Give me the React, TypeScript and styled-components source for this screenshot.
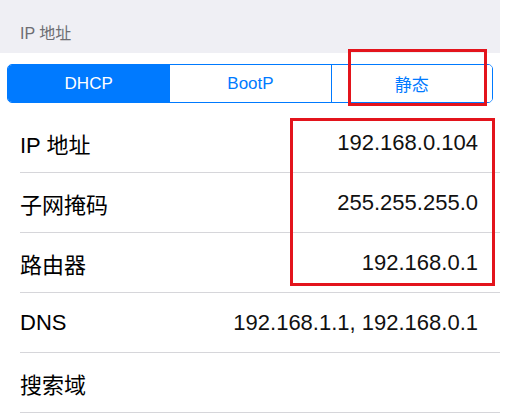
import styled, { createGlobalStyle } from "styled-components";

const GlobalStyle = createGlobalStyle`
  body {
    margin: 0;
    background: #ffffff;
    font-family: "Liberation Sans", "Noto Sans CJK SC", sans-serif;
  }
`;

const Page = styled.div`
  position: relative;
  width: 500px;
`;

const SectionHeader = styled.div`
  height: 53px;
  box-sizing: border-box;
  background: #efeff4;
  padding: 0 20px 9px;
  display: flex;
  align-items: flex-end;
  font-size: 16px;
  color: #6d6d72;
`;

const SegmentBar = styled.div`
  margin: 11px 7px 0;
  height: 39px;
  box-sizing: border-box;
  display: grid;
  grid-template-columns: 1fr 1fr 1fr;
  border: 1px solid #007aff;
  border-radius: 5px;
  overflow: hidden;
`;

const Segment = styled.div<{ $active?: boolean }>`
  display: flex;
  align-items: center;
  justify-content: center;
  font-size: 17px;
  color: ${({ $active }) => ($active ? "#ffffff" : "#007aff")};
  background: ${({ $active }) => ($active ? "#007aff" : "#ffffff")};
  & + & {
    border-left: 1px solid #007aff;
  }
`;

const List = styled.div`
  margin-top: 10px;
  padding-left: 20px;
`;

const Row = styled.div`
  height: 60px;
  box-sizing: border-box;
  padding-right: 22px;
  display: flex;
  align-items: center;
  justify-content: space-between;
  border-bottom: 1px solid #d6d6da;
  font-size: 22px;
  color: #000000;
`;

const Value = styled.span`
  color: #111111;
`;

const Mark = styled.div`
  position: absolute;
  border: 3px solid #e3141c;
  box-sizing: border-box;
  pointer-events: none;
`;

const rows = [
  { label: "IP 地址", value: "192.168.0.104" },
  { label: "子网掩码", value: "255.255.255.0" },
  { label: "路由器", value: "192.168.0.1" },
  { label: "DNS", value: "192.168.1.1, 192.168.0.1" },
  { label: "搜索域", value: "" },
];

export default function App() {
  return (
    <>
      <GlobalStyle />
      <Page>
        <SectionHeader>IP 地址</SectionHeader>
        <SegmentBar>
          <Segment $active>DHCP</Segment>
          <Segment>BootP</Segment>
          <Segment>静态</Segment>
        </SegmentBar>
        <List>
          {rows.map((r) => (
            <Row key={r.label}>
              <span>{r.label}</span>
              <Value>{r.value}</Value>
            </Row>
          ))}
        </List>
        {/* annotation boxes drawn over the screenshot */}
        <Mark style={{ left: 348, top: 49, width: 139, height: 57 }} />
        <Mark style={{ left: 290, top: 118, width: 205, height: 168 }} />
      </Page>
    </>
  );
}
